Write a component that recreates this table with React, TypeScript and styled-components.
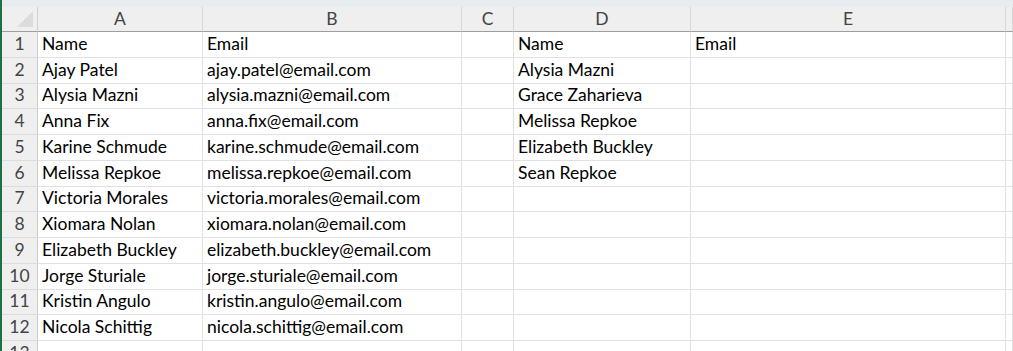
import { Fragment } from "react";
import styled, { createGlobalStyle } from "styled-components";

const GlobalStyle = createGlobalStyle`
  html, body {
    margin: 0;
    background: #ffffff;
  }
  body {
    font-family: Lato, "Open Sans", sans-serif;
  }
`;

const COLUMNS = ["A", "B", "C", "D", "E", ""];

const ROWS: string[][] = [
  ["Name", "Email", "", "Name", "Email"],
  ["Ajay Patel", "ajay.patel@email.com", "", "Alysia Mazni", ""],
  ["Alysia Mazni", "alysia.mazni@email.com", "", "Grace Zaharieva", ""],
  ["Anna Fix", "anna.fix@email.com", "", "Melissa Repkoe", ""],
  ["Karine Schmude", "karine.schmude@email.com", "", "Elizabeth Buckley", ""],
  ["Melissa Repkoe", "melissa.repkoe@email.com", "", "Sean Repkoe", ""],
  ["Victoria Morales", "victoria.morales@email.com", "", "", ""],
  ["Xiomara Nolan", "xiomara.nolan@email.com", "", "", ""],
  ["Elizabeth Buckley", "elizabeth.buckley@email.com", "", "", ""],
  ["Jorge Sturiale", "jorge.sturiale@email.com", "", "", ""],
  ["Kristin Angulo", "kristin.angulo@email.com", "", "", ""],
  ["Nicola Schittig", "nicola.schittig@email.com", "", "", ""],
  ["", "", "", "", ""],
];

const Sheet = styled.div`
  width: 1013px;
  height: 351px;
  overflow: hidden;
  box-sizing: border-box;
  border-left: 2px solid #1e7145;
  background: #ffffff;
`;

const Ribbon = styled.div`
  height: 7px;
  background: #e6ecef;
`;

const Grid = styled.div`
  display: grid;
  grid-template-columns: 36px 165px 259px 52px 177px 315px 1fr;
  grid-template-rows: 25px repeat(13, 25.75px);
`;

const HeaderBase = styled.div`
  box-sizing: border-box;
  background: #efefef;
  color: #444444;
  font-size: 17.5px;
  display: flex;
  align-items: center;
  justify-content: center;
`;

const Corner = styled(HeaderBase)`
  border-right: 1px solid #d2d2d2;
  border-bottom: 1px solid #9e9e9e;
  justify-content: flex-end;
  align-items: flex-end;
  padding: 0 4px 4px 0;
`;

const ColumnHeader = styled(HeaderBase)`
  border-right: 1px solid #d6d6d6;
  border-bottom: 1px solid #9e9e9e;
  padding-bottom: 1px;
`;

const RowHeader = styled(HeaderBase)`
  border-right: 1px solid #cdcdcd;
  border-bottom: 1px solid #dcdcdc;
  padding-bottom: 2px;
`;

const Cell = styled.div`
  box-sizing: border-box;
  border-right: 1px solid #e1e1e1;
  border-bottom: 1px solid #e1e1e1;
  padding: 0 0 2px 4px;
  display: flex;
  align-items: center;
  font-size: 17.5px;
  color: #000000;
  white-space: nowrap;
  overflow: hidden;
`;

export default function App() {
  return (
    <>
      <GlobalStyle />
      <Sheet>
        <Ribbon />
        <Grid>
          <Corner>
            <svg width="16" height="16" viewBox="0 0 16 16">
              <polygon points="16,0 16,16 0,16" fill="#dcdcdc" />
            </svg>
          </Corner>
          {COLUMNS.map((c, i) => (
            <ColumnHeader key={`col-${i}`}>{c}</ColumnHeader>
          ))}
          {ROWS.map((row, r) => (
            <Fragment key={`row-${r}`}>
              <RowHeader>{r + 1}</RowHeader>
              {row.map((value, c) => (
                <Cell key={`cell-${r}-${c}`}>{value}</Cell>
              ))}
              <Cell />
            </Fragment>
          ))}
        </Grid>
      </Sheet>
    </>
  );
}
